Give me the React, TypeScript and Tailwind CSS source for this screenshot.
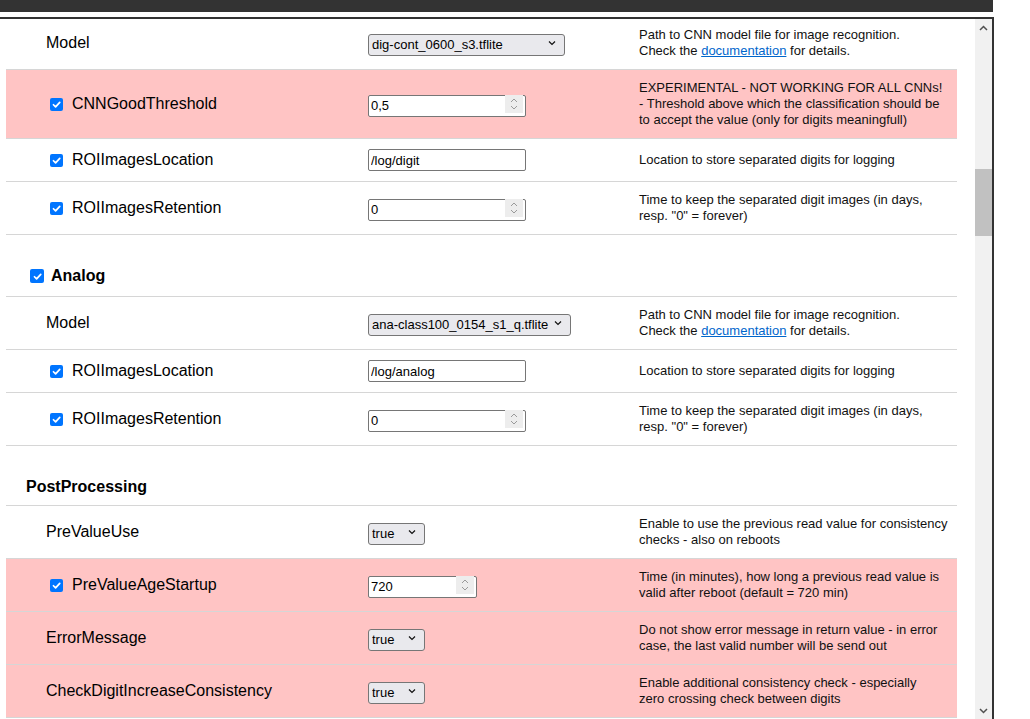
import React from 'react';

type InputSpec =
  | { type: 'select'; value: string; w: string }
  | { type: 'text'; value: string; w: string }
  | { type: 'number'; value: string; w: string };

interface ParamRowProps {
  label: string;
  checkbox?: boolean;
  red?: boolean;
  input: InputSpec;
  desc: React.ReactNode[];
}

function CheckBox({ size = 'w-[13px] h-[13px]' }: { size?: string }) {
  return (
    <span className={`inline-flex shrink-0 items-center justify-center rounded-[2px] bg-[#0075ff] ${size}`}>
      <svg width="9" height="9" viewBox="0 0 10 10">
        <path d="M1.6 5.3 L4 7.7 L8.6 2.6" stroke="white" strokeWidth="1.9" fill="none" strokeLinecap="round" strokeLinejoin="round" />
      </svg>
    </span>
  );
}

function SelectBox({ value, w }: { value: string; w: string }) {
  return (
    <div className={`relative h-[22px] ${w}`}>
      <select
        defaultValue={value}
        className="h-full w-full appearance-none rounded-[3px] border border-[#767676] bg-[#e9e9ed] pl-[3px] text-[13px] text-black outline-none"
      >
        <option>{value}</option>
      </select>
      <svg className="pointer-events-none absolute right-[9px] top-[8px]" width="8" height="6" viewBox="0 0 8 6">
        <path d="M1 1.5 L4 4.5 L7 1.5" stroke="#111" strokeWidth="1.2" fill="none" />
      </svg>
    </div>
  );
}

function TextBox({ value, w }: { value: string; w: string }) {
  return (
    <input
      type="text"
      defaultValue={value}
      className={`h-[22px] rounded-[2px] border border-[#767676] bg-white px-[2px] text-[13px] text-black outline-none ${w}`}
    />
  );
}

function NumberBox({ value, w }: { value: string; w: string }) {
  return (
    <div className={`relative h-[22px] ${w}`}>
      <input
        type="text"
        defaultValue={value}
        className="h-full w-full rounded-[2px] border border-[#767676] bg-white px-[2px] text-[13px] text-black outline-none"
      />
      {/* spin buttons */}
      <div className="pointer-events-none absolute right-[3px] top-[2px] flex h-[18px] w-[18px] flex-col items-center justify-center gap-[2px] bg-[#ededed]">
        <svg width="8" height="5" viewBox="0 0 8 5">
          <path d="M1 4 L4 1 L7 4" stroke="#9a9a9a" strokeWidth="1" fill="none" />
        </svg>
        <svg width="8" height="5" viewBox="0 0 8 5">
          <path d="M1 1 L4 4 L7 1" stroke="#9a9a9a" strokeWidth="1" fill="none" />
        </svg>
      </div>
    </div>
  );
}

function Field({ input }: { input: InputSpec }) {
  switch (input.type) {
    case 'select':
      return <SelectBox value={input.value} w={input.w} />;
    case 'number':
      return <NumberBox value={input.value} w={input.w} />;
    default:
      return <TextBox value={input.value} w={input.w} />;
  }
}

function ParamRow({ label, checkbox, red, input, desc }: ParamRowProps) {
  return (
    <div className={`flex items-center border-b border-[#d6d6d6] py-[10px] ${red ? 'bg-[#ffc4c4]' : ''}`}>
      <div className={`flex w-[362px] items-center text-[16px] leading-[18px] ${checkbox ? 'pl-[44px]' : 'pl-[40px]'}`}>
        {checkbox && <CheckBox />}
        <span className={checkbox ? 'ml-[9px]' : ''}>{label}</span>
      </div>
      <div className="flex w-[271px] items-center">
        <Field input={input} />
      </div>
      <div className="flex-1 text-[13px] leading-[16px] text-[#111]">
        {desc.map((line, i) => (
          <div key={i} className="whitespace-nowrap">{line}</div>
        ))}
      </div>
    </div>
  );
}

function HeadingRow({ label, checkbox, h }: { label: string; checkbox?: boolean; h: string }) {
  return (
    <div className={`border-b border-[#d6d6d6] pt-[32px] ${h}`}>
      <div className={`flex items-center text-[16px] font-bold leading-[18px] ${checkbox ? 'pl-[24px]' : 'pl-[20px]'}`}>
        {checkbox && <CheckBox size="w-[14px] h-[14px]" />}
        <span className={checkbox ? 'ml-[7px]' : ''}>{label}</span>
      </div>
    </div>
  );
}

const docLink = (
  <>
    Check the <a href="#" className="text-[#0066cc] underline">documentation</a> for details.
  </>
);

export default function App() {
  return (
    <div className="h-[719px] w-full overflow-hidden bg-white font-['Liberation_Sans',Arial,sans-serif] text-black">
      <div className="h-[12px] w-[993px] bg-[#333333]" />
      <div className="mt-[5px] flex h-[702px] w-[994px] border-r-2 border-t-2 border-[#333333]">
        {/* page content */}
        <div className="h-full flex-1 overflow-hidden pl-[6px]">
          <div className="-mt-[2px] w-[951px]">
            <ParamRow
              label="Model"
              input={{ type: 'select', value: 'dig-cont_0600_s3.tflite', w: 'w-[197px]' }}
              desc={['Path to CNN model file for image recognition.', docLink]}
            />
            <ParamRow
              label="CNNGoodThreshold"
              checkbox
              red
              input={{ type: 'number', value: '0,5', w: 'w-[158px]' }}
              desc={[
                'EXPERIMENTAL - NOT WORKING FOR ALL CNNs!',
                '- Threshold above which the classification should be',
                'to accept the value (only for digits meaningfull)',
              ]}
            />
            <ParamRow
              label="ROIImagesLocation"
              checkbox
              input={{ type: 'text', value: '/log/digit', w: 'w-[158px]' }}
              desc={['Location to store separated digits for logging']}
            />
            <ParamRow
              label="ROIImagesRetention"
              checkbox
              input={{ type: 'number', value: '0', w: 'w-[158px]' }}
              desc={['Time to keep the separated digit images (in days,', 'resp. "0" = forever)']}
            />

            <HeadingRow label="Analog" checkbox h="h-[62px]" />
            <ParamRow
              label="Model"
              input={{ type: 'select', value: 'ana-class100_0154_s1_q.tflite', w: 'w-[203px]' }}
              desc={['Path to CNN model file for image recognition.', docLink]}
            />
            <ParamRow
              label="ROIImagesLocation"
              checkbox
              input={{ type: 'text', value: '/log/analog', w: 'w-[158px]' }}
              desc={['Location to store separated digits for logging']}
            />
            <ParamRow
              label="ROIImagesRetention"
              checkbox
              input={{ type: 'number', value: '0', w: 'w-[158px]' }}
              desc={['Time to keep the separated digit images (in days,', 'resp. "0" = forever)']}
            />

            <HeadingRow label="PostProcessing" h="h-[60px]" />
            <ParamRow
              label="PreValueUse"
              input={{ type: 'select', value: 'true', w: 'w-[57px]' }}
              desc={['Enable to use the previous read value for consistency', 'checks - also on reboots']}
            />
            <ParamRow
              label="PreValueAgeStartup"
              checkbox
              red
              input={{ type: 'number', value: '720', w: 'w-[109px]' }}
              desc={['Time (in minutes), how long a previous read value is', 'valid after reboot (default = 720 min)']}
            />
            <ParamRow
              label="ErrorMessage"
              red
              input={{ type: 'select', value: 'true', w: 'w-[57px]' }}
              desc={['Do not show error message in return value - in error', 'case, the last valid number will be send out']}
            />
            <ParamRow
              label="CheckDigitIncreaseConsistency"
              red
              input={{ type: 'select', value: 'true', w: 'w-[57px]' }}
              desc={['Enable additional consistency check - especially', 'zero crossing check between digits']}
            />
          </div>
        </div>

        {/* scrollbar */}
        <div className="flex h-full w-[17px] shrink-0 flex-col bg-[#f1f1f1]">
          <div className="flex h-[17px] items-center justify-center">
            <svg width="9" height="6" viewBox="0 0 9 6">
              <path d="M1 5 L4.5 1.5 L8 5" stroke="#505050" strokeWidth="1.5" fill="none" />
            </svg>
          </div>
          <div className="h-[133px]" />
          <div className="h-[67px] bg-[#c1c1c1]" />
          <div className="flex-1" />
          <div className="flex h-[17px] items-center justify-center">
            <svg width="9" height="6" viewBox="0 0 9 6">
              <path d="M1 1 L4.5 4.5 L8 1" stroke="#505050" strokeWidth="1.5" fill="none" />
            </svg>
          </div>
        </div>
      </div>
    </div>
  );
}
